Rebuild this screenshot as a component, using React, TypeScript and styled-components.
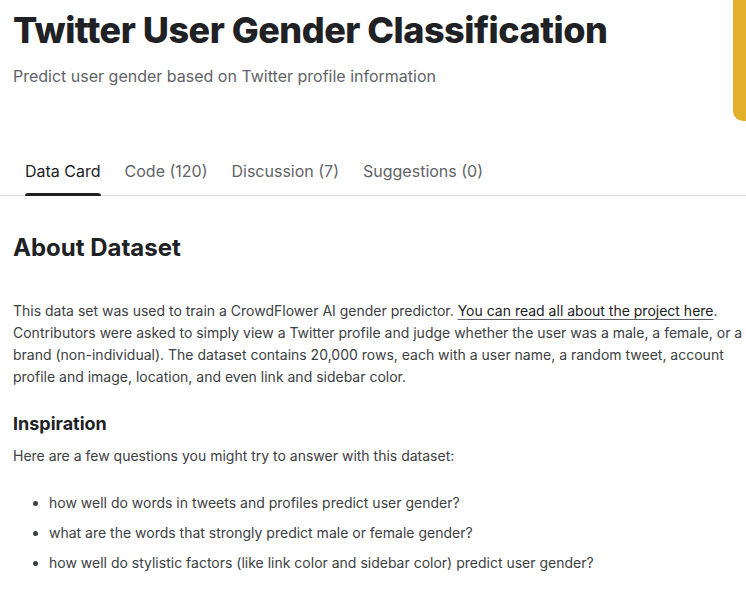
import React from "react";
import styled, { createGlobalStyle } from "styled-components";

const GlobalStyle = createGlobalStyle`
  html, body {
    margin: 0;
    padding: 0;
    background: #ffffff;
    font-family: Inter, "Noto Sans", sans-serif;
    color: #202124;
  }
`;

const Page = styled.div`
  position: relative;
  width: 746px;
  height: 589px;
  overflow: hidden;
  background: #fff;
`;

const Header = styled.header`
  padding: 6px 13px 0;
  height: 141px;
  box-sizing: border-box;
`;

const Title = styled.h1`
  margin: 0;
  font-size: 36px;
  line-height: 48px;
  font-weight: 800;
  letter-spacing: -0.5px;
  color: #202124;
`;

const Subtitle = styled.p`
  margin: 10px 0 0;
  font-size: 16px;
  line-height: 24px;
  color: #5f6368;
`;

const Accent = styled.div`
  position: absolute;
  top: 0;
  right: 0;
  width: 13px;
  height: 121px;
  background: #e2b02a;
  border-bottom-left-radius: 10px;
`;

const Tabs = styled.nav`
  display: flex;
  gap: 24px;
  padding: 0 25px;
  border-bottom: 1px solid #dadce0;
`;

const Tab = styled.div<{ $active?: boolean }>`
  position: relative;
  padding: 20px 0 14px;
  font-size: 16px;
  line-height: 20px;
  color: ${(p) => (p.$active ? "#202124" : "#5f6368")};

  &::after {
    content: "";
    display: ${(p) => (p.$active ? "block" : "none")};
    position: absolute;
    left: 0;
    right: 0;
    bottom: -1px;
    height: 3px;
    border-radius: 3px 3px 0 0;
    background: #202124;
  }
`;

const Content = styled.section`
  padding: 0 0 0 13px;
`;

const H2 = styled.h2`
  margin: 37px 0 0;
  font-size: 24px;
  line-height: 30px;
  font-weight: 700;
  color: #202124;
`;

const Paragraph = styled.p<{ $top: number }>`
  margin: ${(p) => p.$top}px 0 0;
  font-size: 14px;
  line-height: 22px;
  color: #3c4043;

  a {
    color: #202124;
    text-decoration: underline;
    text-underline-offset: 3px;
    text-decoration-color: #5f6368;
  }
`;

const H3 = styled.h3`
  margin: 24px 0 0;
  font-size: 18px;
  line-height: 24px;
  font-weight: 700;
  color: #202124;
`;

const List = styled.ul`
  margin: 25px 0 0;
  padding-left: 36px;
  font-size: 14px;
  line-height: 22px;
  color: #3c4043;

  li {
    margin-bottom: 8px;
  }
`;

const tabs = ["Data Card", "Code (120)", "Discussion (7)", "Suggestions (0)"];

const questions = [
  "how well do words in tweets and profiles predict user gender?",
  "what are the words that strongly predict male or female gender?",
  "how well do stylistic factors (like link color and sidebar color) predict user gender?",
];

export default function App() {
  return (
    <Page>
      <GlobalStyle />
      <Accent />
      <Header>
        <Title>Twitter User Gender Classification</Title>
        <Subtitle>Predict user gender based on Twitter profile information</Subtitle>
      </Header>
      <Tabs>
        {tabs.map((t, i) => (
          <Tab key={t} $active={i === 0}>
            {t}
          </Tab>
        ))}
      </Tabs>
      <Content>
        <H2>About Dataset</H2>
        <Paragraph $top={37}>
          This data set was used to train a CrowdFlower AI gender predictor.{" "}
          <a href="#">You can read all about the project here</a>. Contributors
          were asked to simply view a Twitter profile and judge whether the user
          was a male, a female, or a brand (non-individual). The dataset contains
          20,000 rows, each with a user name, a random tweet, account profile and
          image, location, and even link and sidebar color.
        </Paragraph>
        <H3>Inspiration</H3>
        <Paragraph $top={9}>
          Here are a few questions you might try to answer with this dataset:
        </Paragraph>
        <List>
          {questions.map((q) => (
            <li key={q}>{q}</li>
          ))}
        </List>
      </Content>
    </Page>
  );
}
